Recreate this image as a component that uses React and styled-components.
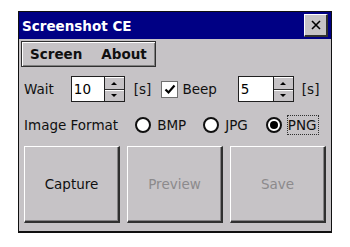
import styled, { createGlobalStyle } from "styled-components";

const GlobalStyle = createGlobalStyle`
  body {
    margin: 0;
    background: #ffffff;
    font-family: "DejaVu Sans", "Liberation Sans", sans-serif;
  }
`;

const Window = styled.div`
  box-sizing: border-box;
  margin: 11px 0 0 18px;
  width: 314px;
  height: 222px;
  background: #c6c3c6;
  border: 1px solid #101010;
  border-bottom-width: 2px;
  display: flex;
  flex-direction: column;
`;

const TitleBar = styled.div`
  height: 27px;
  background: #000084;
  display: flex;
  align-items: center;
  justify-content: space-between;
  padding: 0 3px 0 3px;
`;

const Title = styled.span`
  color: #ffffff;
  font-weight: bold;
  font-size: 13.5px;
`;

const CloseButton = styled.div`
  box-sizing: border-box;
  width: 24px;
  height: 23px;
  background: #c6c3c6;
  border-top: 1px solid #ffffff;
  border-left: 1px solid #ffffff;
  border-right: 2px solid #303030;
  border-bottom: 2px solid #303030;
  display: flex;
  align-items: center;
  justify-content: center;
`;

const Body = styled.div`
  padding: 2px 4px 0 2px;
  display: flex;
  flex-direction: column;
`;

const MenuBar = styled.div`
  box-sizing: border-box;
  width: 135px;
  height: 26px;
  border: 1px solid #303030;
  box-shadow: inset 1px 1px 0 #ffffff, inset -1px -1px 0 #808080;
  display: flex;
  align-items: center;
  padding-left: 8px;
  gap: 19px;
`;

const MenuItem = styled.span`
  font-weight: bold;
  font-size: 13.5px;
  color: #101010;
`;

const Row = styled.div`
  display: flex;
  align-items: center;
  height: ${(p) => p.h}px;
  margin-top: ${(p) => p.top}px;
  padding-left: 3px;
`;

const Label = styled.span`
  font-size: 13.5px;
  color: #101010;
  margin-left: ${(p) => p.ml || 0}px;
`;

const Spinner = styled.div`
  display: flex;
  height: 26px;
  margin-left: ${(p) => p.ml}px;
`;

const EditBox = styled.div`
  box-sizing: border-box;
  width: ${(p) => p.w}px;
  height: 26px;
  background: #ffffff;
  border: 1px solid #202020;
  font-size: 13.5px;
  display: flex;
  align-items: center;
  padding-left: 2px;
`;

const SpinColumn = styled.div`
  box-sizing: border-box;
  width: 20px;
  height: 26px;
  border: 1px solid #202020;
  border-left: none;
  display: flex;
  flex-direction: column;
`;

const SpinButton = styled.div`
  flex: 1;
  background: #c6c3c6;
  border-top: 1px solid #ffffff;
  border-bottom: ${(p) => (p.top ? "1px solid #303030" : "none")};
  display: flex;
  align-items: center;
  justify-content: center;
`;

const Arrow = styled.div`
  width: 0;
  height: 0;
  border-left: 3px solid transparent;
  border-right: 3px solid transparent;
  ${(p) =>
    p.up ? "border-bottom: 3px solid #000;" : "border-top: 3px solid #000;"}
`;

const CheckBox = styled.div`
  box-sizing: border-box;
  width: 17px;
  height: 17px;
  background: #ffffff;
  border: 1px solid #707070;
  margin-left: ${(p) => p.ml}px;
  margin-right: 4px;
  display: flex;
  align-items: center;
  justify-content: center;
`;

const Radio = styled.div`
  box-sizing: border-box;
  width: 16px;
  height: 16px;
  border-radius: 50%;
  background: #ffffff;
  border: 2px solid #101010;
  margin-left: ${(p) => p.ml}px;
  margin-right: 6px;
  display: flex;
  align-items: center;
  justify-content: center;
`;

const RadioDot = styled.div`
  width: 8px;
  height: 8px;
  border-radius: 50%;
  background: #000;
`;

const Focus = styled.span`
  outline: 1px dotted #303030;
  outline-offset: 0;
  padding: 1px 1px 1px 0;
`;

const ButtonRow = styled.div`
  display: flex;
  margin-top: 10px;
  padding-left: 3px;
  gap: 7px;
`;

const Button = styled.div`
  box-sizing: border-box;
  width: 96px;
  height: 77px;
  background: #c6c3c6;
  border-top: 1px solid #ffffff;
  border-left: 1px solid #ffffff;
  border-right: 2px solid #303030;
  border-bottom: 2px solid #303030;
  box-shadow: inset -1px -1px 0 #848284;
  display: flex;
  align-items: center;
  justify-content: center;
  font-size: 13.5px;
  color: ${(p) => (p.disabled ? "#8c8a8c" : "#101010")};
`;

export default function App() {
  return (
    <>
      <GlobalStyle />
      <Window>
        <TitleBar>
          <Title>Screenshot CE</Title>
          <CloseButton>
            <svg width="10" height="10" viewBox="0 0 10 10">
              <path d="M1 1 L9 9 M9 1 L1 9" stroke="#000" strokeWidth="1.6" />
            </svg>
          </CloseButton>
        </TitleBar>
        <Body>
          <MenuBar>
            <MenuItem>Screen</MenuItem>
            <MenuItem>About</MenuItem>
          </MenuBar>
          <Row h={26} top={9}>
            <Label>Wait</Label>
            <Spinner ml={17}>
              <EditBox w={34}>10</EditBox>
              <SpinColumn>
                <SpinButton top>
                  <Arrow up />
                </SpinButton>
                <SpinButton>
                  <Arrow />
                </SpinButton>
              </SpinColumn>
            </Spinner>
            <Label ml={9}>[s]</Label>
            <CheckBox ml={10}>
              <svg width="12" height="11" viewBox="0 0 12 11">
                <path
                  d="M1.5 5.5 L4.5 8.5 L10.5 1.5"
                  stroke="#000"
                  strokeWidth="2.2"
                  fill="none"
                />
              </svg>
            </CheckBox>
            <Label>Beep</Label>
            <Spinner ml={21}>
              <EditBox w={36}>5</EditBox>
              <SpinColumn>
                <SpinButton top>
                  <Arrow up />
                </SpinButton>
                <SpinButton>
                  <Arrow />
                </SpinButton>
              </SpinColumn>
            </Spinner>
            <Label ml={8}>[s]</Label>
          </Row>
          <Row h={22} top={12}>
            <Label>Image Format</Label>
            <Radio ml={17} />
            <Label>BMP</Label>
            <Radio ml={17} />
            <Label>JPG</Label>
            <Radio ml={18}>
              <RadioDot />
            </Radio>
            <Label>
              <Focus>PNG</Focus>
            </Label>
          </Row>
          <ButtonRow>
            <Button>Capture</Button>
            <Button disabled>Preview</Button>
            <Button disabled>Save</Button>
          </ButtonRow>
        </Body>
      </Window>
    </>
  );
}
